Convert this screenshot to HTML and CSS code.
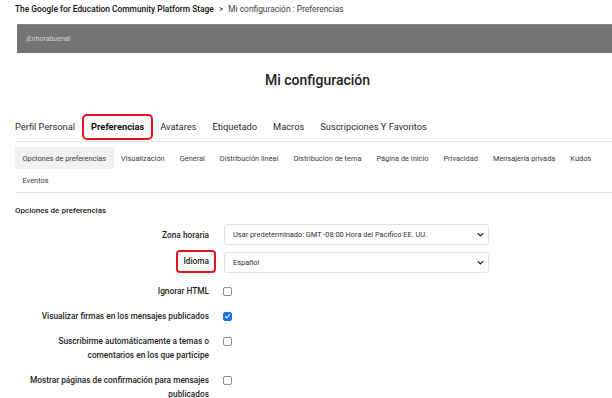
FILE: index.html
```html
<!DOCTYPE html>
<html lang="es">
<head>
  <meta charset="UTF-8" />
  <meta name="viewport" content="width=device-width, initial-scale=1.0"/>
  <title>Mi configuración : Preferencias</title>
  <link rel="stylesheet" href="styles.css">
</head>
<body>
  <div class="page">
    <div class="breadcrumb">
      <span class="crumb-home">The Google for Education Community Platform Stage</span>
      <span class="crumb-sep">&gt;</span>
      <span>Mi configuración : Preferencias</span>
    </div>

    <div class="banner">¡Enhorabuena!</div>

    <h1>Mi configuración</h1>

    <nav class="tabs">
      <span class="tab">Perfil Personal</span>
      <span class="tab active">Preferencias</span>
      <span class="tab">Avatares</span>
      <span class="tab">Etiquetado</span>
      <span class="tab">Macros</span>
      <span class="tab">Suscripciones Y Favoritos</span>
    </nav>

    <nav class="subtabs">
      <span class="subtab current">Opciones de preferencias</span>
      <span class="subtab">Visualización</span>
      <span class="subtab">General</span>
      <span class="subtab">Distribución lineal</span>
      <span class="subtab">Distribución de tema</span>
      <span class="subtab">Página de inicio</span>
      <span class="subtab">Privacidad</span>
      <span class="subtab">Mensajería privada</span>
      <span class="subtab">Kudos</span>
      <span class="subtab">Eventos</span>
    </nav>

    <h2 class="section-title">Opciones de preferencias</h2>

    <form class="prefs">
      <div class="row">
        <label class="row-label" for="tz">Zona horaria</label>
        <div class="select-wrap">
          <select id="tz">
            <option>Usar predeterminado: GMT -08:00 Hora del Pacífico EE. UU.</option>
          </select>
          <svg class="chevron" viewBox="0 0 10 6" width="7" height="5"><path d="M1 1l4 4 4-4" fill="none" stroke="#222" stroke-width="1.8"/></svg>
        </div>
      </div>

      <div class="row lang-row">
        <div class="row-label"><label class="marked" for="lang">Idioma</label></div>
        <div class="select-wrap">
          <select id="lang">
            <option>Español</option>
          </select>
          <svg class="chevron" viewBox="0 0 10 6" width="7" height="5"><path d="M1 1l4 4 4-4" fill="none" stroke="#222" stroke-width="1.8"/></svg>
        </div>
      </div>

      <div class="row check-row">
        <label class="row-label" for="html">Ignorar HTML</label>
        <input type="checkbox" id="html">
      </div>

      <div class="row check-row">
        <label class="row-label" for="sig">Visualizar firmas en los mensajes publicados</label>
        <input type="checkbox" id="sig" checked>
      </div>

      <div class="row check-row">
        <label class="row-label" for="sub">Suscribirme automáticamente a temas o comentarios en los que participe</label>
        <input type="checkbox" id="sub">
      </div>

      <div class="row check-row">
        <label class="row-label" for="conf">Mostrar páginas de confirmación para mensajes publicados</label>
        <input type="checkbox" id="conf">
      </div>
    </form>
  </div>
</body>
</html>
```

FILE: styles.css
```css
* {
  box-sizing: border-box;
}

body {
  margin: 0;
  font-family: Roboto, 'Noto Sans', sans-serif;
  color: #202124;
  background: #fff;
  overflow: hidden;
}

.page {
  padding-left: 15px;
}

.breadcrumb {
  padding-top: 3px;
  font-size: 8.4px;
  line-height: 12px;
  color: #3c3c3c;
}

.crumb-home {
  font-weight: 500;
  color: #111;
}

.crumb-sep {
  margin: 0 3px;
}

.banner {
  margin: 9px 0 0 2px;
  height: 29px;
  display: flex;
  align-items: center;
  padding-left: 9px;
  background: #747474;
  border-top: 1px solid #888;
  color: #d6d6d6;
  font-size: 7px;
}

h1 {
  margin: 17px 0 0;
  padding-left: 8px;
  text-align: center;
  font-size: 14px;
  line-height: 20px;
  font-weight: 500;
  color: #222;
}

.tabs {
  display: flex;
  gap: 16px;
  margin-top: 24px;
  padding-bottom: 1px;
  border-bottom: 1px solid #e4e4e4;
}

.tab {
  padding: 5px 7px;
  margin: 0 -9px;
  border: 2px solid transparent;
  border-radius: 5px;
  font-size: 9.3px;
  line-height: 12px;
  color: #2a2a2a;
}

.tab:first-child {
  margin-left: 0;
  padding-left: 0;
  border-left: 0;
}

.tab.active {
  border-color: #e8141c;
  font-weight: 700;
  color: #111;
}

.subtabs {
  display: flex;
  flex-wrap: wrap;
  margin-top: 5px;
  padding-bottom: 1px;
  border-bottom: 1px solid #e4e4e4;
}

.subtab {
  height: 22px;
  display: flex;
  align-items: center;
  padding: 0 7.5px;
  font-size: 7.4px;
  color: #3a3a3a;
}

.subtab.current {
  background: #f1f1f1;
}

.section-title {
  margin: 12px 0 0;
  font-size: 8px;
  line-height: 12px;
  font-weight: 500;
  color: #222;
}

.prefs {
  display: flex;
  flex-direction: column;
  gap: 5px;
  margin-top: 7px;
}

.row {
  display: flex;
  align-items: center;
  gap: 15px;
}

.lang-row {
  align-items: flex-end;
}

.check-row {
  align-items: flex-start;
  gap: 14px;
  margin-top: 6px;
}

.row-label {
  width: 184px;
  margin-left: 10px;
  flex: none;
  text-align: right;
  font-size: 8.3px;
  line-height: 14px;
  font-weight: 500;
  color: #1e1e1e;
}

.marked {
  display: inline-block;
  margin-right: -7px;
  padding: 3px 5px;
  border: 2px solid #e8141c;
  border-radius: 4px;
  line-height: 13px;
}

.select-wrap {
  position: relative;
  width: 265px;
}

select {
  display: block;
  width: 100%;
  height: 21px;
  appearance: none;
  -webkit-appearance: none;
  padding: 0 8px;
  border: 1px solid #e3e3e3;
  border-radius: 3px;
  background: #fff;
  font-family: inherit;
  font-size: 7.4px;
  color: #2e2e2e;
}

.chevron {
  position: absolute;
  right: 5px;
  top: 8px;
}

input[type="checkbox"] {
  appearance: none;
  -webkit-appearance: none;
  position: relative;
  width: 9px;
  height: 9px;
  margin: 3px 0 0;
  border: 1px solid #8e8e8e;
  border-radius: 2px;
  background: #fff;
}

input[type="checkbox"]:checked {
  background: #1a73e8;
  border-color: #1a73e8;
}

input[type="checkbox"]:checked::after {
  content: "";
  position: absolute;
  left: 2px;
  top: 0px;
  width: 2px;
  height: 4px;
  border: solid #fff;
  border-width: 0 1.5px 1.5px 0;
  transform: rotate(40deg);
}
```
